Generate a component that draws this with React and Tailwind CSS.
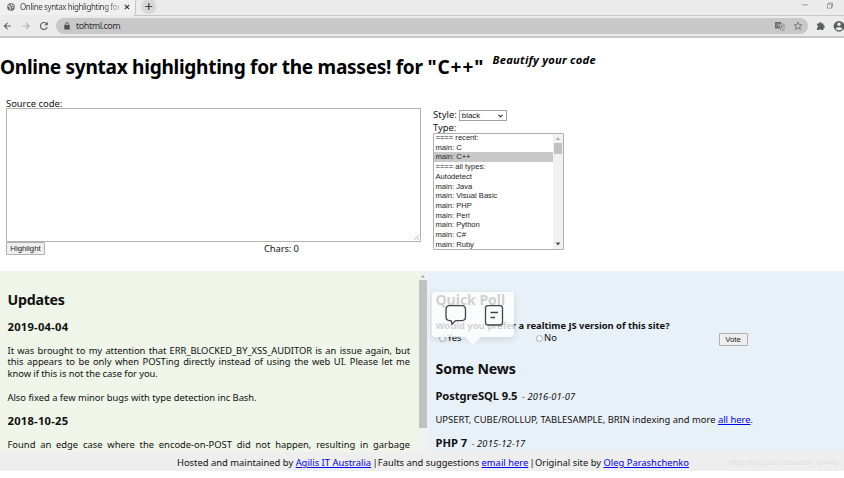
import React from "react";

const types = [
  "==== recent:",
  "main: C",
  "main: C++",
  "==== all types:",
  "Autodetect",
  "main: Java",
  "main: Visual Basic",
  "main: PHP",
  "main: Perl",
  "main: Python",
  "main: C#",
  "main: Ruby",
];

function Browser() {
  return (
    <header className="h-[38px] bg-[#ebebeb] text-[#444]">
      <div className="flex h-4 border-b border-[#c6c6c6]">
        <div className="-mb-px flex h-4 w-[136px] items-center rounded-br-[4px] border-r border-b border-[#c6c6c6] border-b-[#ebebeb] bg-[#f0f0f0] pl-[7px]">
          <svg width="8" height="8" viewBox="0 0 8 8" className="mt-[-2px] shrink-0">
            <circle cx="4" cy="4" r="3.8" fill="#666" />
            <path d="M1 2.5 2.7 3.4 3.7 5 3 6.7M4 1l.5 1.4L6.7 3M5 4.5l1.4.4" stroke="#eee" strokeWidth="1.1" fill="none" />
          </svg>
          <span className="mt-[-2px] ml-[5px] w-[99px] shrink-0 text-[8px] leading-[12px] tracking-[-0.4px] whitespace-nowrap [mask-image:linear-gradient(to_right,black_85%,rgba(0,0,0,0.3))]">Online syntax highlighting for</span>
          <svg width="6" height="6" viewBox="0 0 6 6" className="mt-[-2px] ml-[5px] shrink-0">
            <path d="M.8.8 5.2 5.2M5.2.8.8 5.2" stroke="#333" strokeWidth="1.1" />
          </svg>
        </div>
        <svg width="16" height="15" viewBox="0 0 16 15" className="ml-[5px]">
          <circle cx="7.8" cy="6.5" r="7.6" fill="#d8d8d8" />
          <path d="M7.8 3v7M4.300 6.5h7" stroke="#444" strokeWidth="1.2" />
        </svg>
        <svg width="48" height="15" viewBox="0 0 48 15" className="ml-auto" fill="none" stroke="#8d8d8d" strokeWidth=".8">
          <path d="M6 4.8h6M31.500 4.200h4v4h-4zM32.500 4v-1h4v4h-1" />
        </svg>
      </div>
      <div className="flex h-[22px] items-center border-b-2 border-[#c8c8c8]">
        <svg width="56" height="20" viewBox="0 0 56 20" fill="none" strokeWidth="1.1">
          <path d="M11 10H4.500M7.500 6.800 4.300 10l3.200 3.200" stroke="#606060" />
          <path d="M22.500 10H29M26 6.800l3.200 3.200-3.200 3.200" stroke="#b4b4b4" />
          <path d="M46.800 8A3.500 3.500 0 1 0 47.200 11.200M47.300 6.300v2.400h-2.600" stroke="#606060" />
        </svg>
        <div className="flex h-4 w-[752px] items-center rounded-full bg-[#c8c8c8] pl-[8px]">
          <svg width="6" height="8" viewBox="0 0 6 8">
            <path d="M.3 3h5.400v4.500H.3z" fill="#505050" />
            <path d="M1.500 3V2a1.500 1.500 0 0 1 3 0v1" fill="none" stroke="#505050" strokeWidth=".8" />
          </svg>
          <span className="ml-[6px] text-[9px] leading-[14px] tracking-[-0.45px] text-[#333]">tohtml.com</span>
          <svg width="32" height="12" viewBox="0 0 32 12" className="ml-auto mr-[4px]">
            <path d="M3 2h6v6.500H3z" fill="#6d6d6d" />
            <path d="M7 4h5v6H8.500z" fill="#ccc" stroke="#777" strokeWidth=".6" />
            <path d="M4.500 4.200h2.500M4.500 6h2.500" stroke="#ccc" strokeWidth=".6" />
            <path d="M8.500 6h2.800M9.800 5.200V6c0 1-.6 2-1 2.300M9 7l2 1.500" stroke="#777" strokeWidth=".5" />
            <path d="m26 2.200 1.100 2.500 2.700.2-2.100 1.800.7 2.600-2.400-1.400-2.400 1.400.7-2.600-2.100-1.800 2.700-.2z" fill="none" stroke="#686868" strokeWidth=".8" />
          </svg>
        </div>
        <svg width="36" height="20" viewBox="0 0 36 20" className="shrink-0" fill="#5c5e61">
          <path d="M9 7.500h2a1.300 1.300 0 0 1 2.600 0h1.900v2a1.300 1.300 0 0 1 0 2.600v2H13a1.200 1.200 0 0 0-2.300 0H9v-2.400a1.100 1.100 0 0 0 0-2.200z" />
          <circle cx="31" cy="10.300" r="5.400" />
          <circle cx="31" cy="8.300" r="1.700" fill="#ebebeb" />
          <path d="M27.500 12.700c.8-2.100 6.200-2.100 7 0-1.700 2.100-5.300 2.100-7 0z" fill="#ebebeb" />
        </svg>
      </div>
    </header>
  );
}

function SourceForm() {
  return (
    <form className="flex h-[174px] pl-[6px]" onSubmit={(e) => e.preventDefault()}>
      <div className="w-[416px]">
        <div className="h-[11px] leading-[13px]">Source code:</div>
        <div className="flex h-[134px] w-[415px] items-end justify-end border border-[#b2b2b2] bg-white">
          <svg width="7" height="7" viewBox="0 0 7 7" stroke="#999" strokeWidth=".7">
            <path d="M1 6 6 1M4 6l2-2" />
          </svg>
        </div>
        <div className="flex">
          <button className="h-[13px] w-[39px] rounded-[1px] border border-[#b0b0b0] bg-[#efefef] font-['Liberation_Sans',sans-serif] text-[7.8px] leading-[11px] text-[#222]">Highlight</button>
          <span className="ml-[219px] leading-[13px] tracking-[-0.1px]">Chars: 0</span>
        </div>
      </div>
      <div className="ml-[11px] pt-[12px]">
        <div className="flex h-[12px] items-center">
          <span className="tracking-[0.05px]">Style:</span>
          <div className="mt-px ml-[2px] flex h-[11px] w-[48px] items-center justify-between border border-[#a0a0a0] bg-white pr-[3px] pl-[2px] font-['Liberation_Sans',sans-serif] text-[7.8px] leading-[9px]">
            black
            <svg width="5" height="4" viewBox="0 0 5 4"><path d="m.5.800 2 2 2-2" fill="none" stroke="#222" strokeWidth="1.100" /></svg>
          </div>
        </div>
        <div className="h-[12px] leading-[13px]">Type:</div>
        <div className="flex h-[117px] w-[131px] overflow-hidden rounded-[1px] border border-[#b0b0b0] bg-white">
          <ul className="-mt-px flex-1 font-['Liberation_Sans',sans-serif] text-[7.6px] leading-[9.72px] text-[#222]">
            {types.map((t, i) => (
              <li key={t} className={i === 2 ? "h-[9.72px] bg-[#c8c8c8] pl-[1.5px]" : "h-[9.72px] pl-[1.5px]"}>{t}</li>
            ))}
          </ul>
          <div className="flex w-[10px] flex-col items-center justify-between bg-[#f1f1f1] pb-[3px]">
            <svg width="8" height="9" viewBox="0 0 8 9"><path d="M2 6h4L4 3.500z" fill="#a3a3a3" /></svg>
            <div className="mb-auto h-[11px] w-2 bg-[#c1c1c1]" />
            <svg width="8" height="4" viewBox="0 0 8 4"><path d="M1.500.500h5L4 3.500z" fill="#505050" /></svg>
          </div>
        </div>
      </div>
    </form>
  );
}

function Updates() {
  return (
    <section className="flex h-[181px] w-[428px] overflow-hidden bg-[#eff5e9]">
      <div className="w-[418px] pt-[20px] pl-[7.5px]">
        <h2 className="h-[18px] text-[14.2px] leading-[18px] font-bold tracking-[-0.25px]">Updates</h2>
        <h3 className="mt-[10px] h-[16px] text-[11.2px] leading-[16px] font-bold tracking-[0.25px]">2019-04-04</h3>
        <div className="mt-[9.6px] w-[402.5px] leading-[11.8px] tracking-[-0.05px] whitespace-nowrap">
          <p className="[text-align-last:justify]">It was brought to my attention that ERR_BLOCKED_BY_XSS_AUDITOR is an issue again, but</p>
          <p className="[text-align-last:justify]">this appears to be only when POSTing directly instead of using the web UI. Please let me</p>
          <p>know if this is not the case for you.</p>
          <p className="mt-[11.8px] tracking-[-0.02px]">Also fixed a few minor bugs with type detection inc Bash.</p>
        </div>
        <h3 className="mt-[9.4px] h-[16px] text-[11.2px] leading-[16px] font-bold tracking-[0.25px]">2018-10-25</h3>
        <p className="mt-[9.600px] w-[402.5px] leading-[12px] [text-align-last:justify]">Found an edge case where the encode-on-POST did not happen, resulting in garbage</p>
      </div>
      <div className="flex w-[10px] flex-col items-center bg-[#f1f1f1]">
        <svg width="8" height="9" viewBox="0 0 8 9"><path d="M2 6.500h4L4 4z" fill="#a3a3a3" /></svg>
        <div className="h-[148px] w-2 bg-[#c1c1c1]" />
      </div>
    </section>
  );
}

function Toolbar() {
  return (
    <div className="absolute top-[21px] left-[4px] h-[45px] w-[82px] rounded-[3px] bg-white/80 shadow-[0_2px_6px_rgba(0,0,0,0.12)]">
      <svg width="82" height="53" viewBox="0 0 82 53" fill="none" stroke="#444" strokeWidth="1.300" strokeLinejoin="round">
        <path d="M33 45h16l-8 7.500z" fill="white" fillOpacity=".85" stroke="none" />
        <path d="M17.500 13.600h12.500q3.500 0 3.500 4v7q0 4-3.500 4h-6.500l-3.500 3.600-.6-3.200-1.900-.4q-3.500 0-3.500-4v-7q0-4 3.500-4z" />
        <rect x="53.500" y="13.600" width="17" height="19.400" rx="2.500" />
        <path d="M58.500 20.500h7.500M58.500 25.500h4.500" />
      </svg>
    </div>
  );
}

function News() {
  return (
    <section className="relative h-[181px] w-[416px] overflow-hidden bg-[#e8f0f8] pt-[20px] pl-[7.5px]">
      <h2 className="h-[18px] text-[14.2px] leading-[18px] font-bold tracking-[-0.1px]">Quick Poll</h2>
      <p className="mt-[11px] h-[12px] leading-[12px] font-bold tracking-[-0.01px]">Would you prefer a realtime JS version of this site?</p>
      <div className="flex h-[14px]">
        <label className="mt-[-1px] flex w-[97px] items-center pl-[3px]"><i className="mr-[1.5px] size-[7px] rounded-full border border-[#aaa] bg-white" />Yes</label>
        <label className="mt-[-1px] flex w-[186px] items-center pl-[3px]"><i className="mr-[1.5px] size-[7px] rounded-full border border-[#aaa] bg-white" />No</label>
        <button className="mt-px h-[13px] w-[29px] rounded-[1px] border border-[#b0b0b0] bg-[#efefef] font-['Liberation_Sans',sans-serif] text-[7.8px] leading-[11px] text-[#222]">Vote</button>
      </div>
      <h2 className="mt-[14px] h-[18px] text-[14.2px] leading-[18px] font-bold tracking-[-0.15px]">Some News</h2>
      <h3 className="mt-[10px] h-[16px] leading-[16px]"><b className="text-[11.2px] tracking-[-0.08px]">PostgreSQL 9.5</b> <span className="ml-[2px] text-[9.3px] tracking-[0.1px] italic">- 2016-01-07</span></h3>
      <p className="mt-[9.600px] h-[12px] leading-[12px]">UPSERT, CUBE/ROLLUP, TABLESAMPLE, BRIN indexing and more <a className="text-[#0000ee] underline">all here</a>.</p>
      <h3 className="mt-[9.4px] h-[16px] leading-[16px]"><b className="text-[11.2px] tracking-[-0.05px]">PHP 7</b> <span className="ml-[2px] text-[9.3px] tracking-[0.15px] italic">- 2015-12-17</span></h3>
      <Toolbar />
    </section>
  );
}

export default function App() {
  return (
    <div className="relative h-[478px] w-[844px] overflow-hidden bg-white font-['Noto_Sans','Open_Sans',sans-serif] text-[9.4px] text-[#111]">
      <Browser />
      <div className="flex h-[59px] pt-[16px] text-black">
        <h1 className="w-[485px] text-[19.1px] leading-[26px] font-bold tracking-[-0.3px] whitespace-nowrap">Online syntax highlighting for the masses! for <span className="tracking-[0.9px]">"C++"</span></h1>
        <span className="mt-[-1px] ml-[7.5px] text-[11.2px] leading-[13px] font-bold tracking-[0.25px] italic">Beautify your code</span>
      </div>
      <SourceForm />
      <main className="flex">
        <Updates />
        <News />
      </main>
      <footer className="relative flex h-[19px] items-center bg-[#eeeeee] pt-[3px] pl-[177px] text-[9.4px] whitespace-pre">
        Hosted and maintained by <a className="text-[#0000ee] underline">Agilis IT Australia</a><span className="tracking-[-1.1px]"> | </span>Faults and suggestions <a className="text-[#0000ee] underline">email here</a><span className="tracking-[-1.1px]"> | </span>Original site by <a className="text-[#0000ee] underline">Oleg Parashchenko</a>
        <span className="ml-[40px] font-['Liberation_Sans',sans-serif] text-[7px] tracking-[-0.05px] text-[#e0e0e0]">https://blog.csdn.net/weixin_454443</span>
      </footer>
    </div>
  );
}
